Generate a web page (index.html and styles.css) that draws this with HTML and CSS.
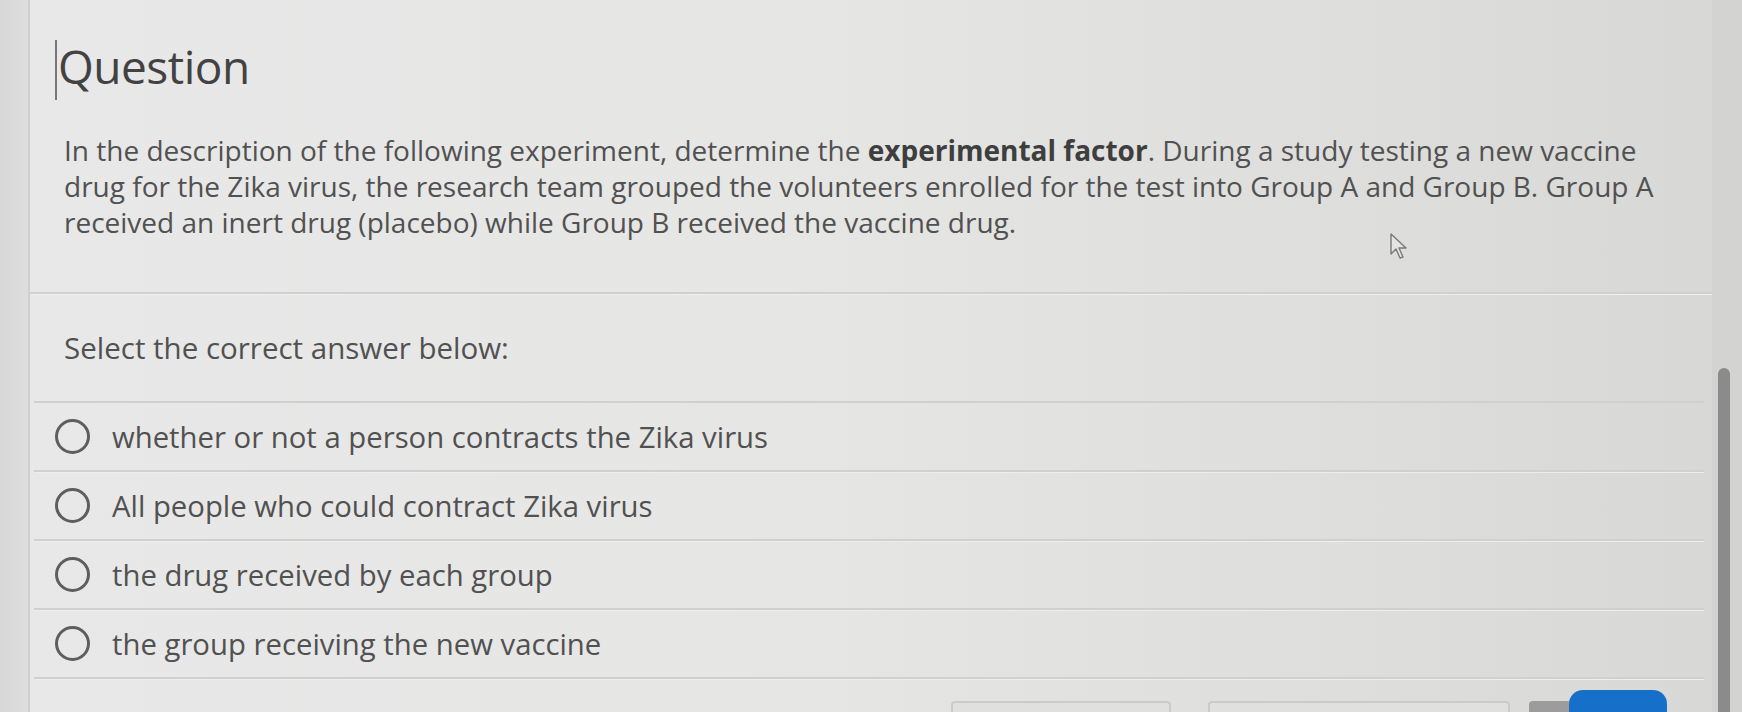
FILE: index.html
```html
<!DOCTYPE html>
<html lang="en">
<head>
  <meta charset="UTF-8">
  <title>Question</title>
  <link rel="stylesheet" href="styles.css">
</head>
<body>
  <div class="page">
    <main class="panel">
      <section class="question">
        <h1 class="title"><span class="caret"></span>Question</h1>
        <p class="prompt">In the description of the following experiment, determine the <b>experimental factor</b>. During a study testing a new vaccine drug for the Zika virus, the research team grouped the volunteers enrolled for the test into Group A and Group B. Group A received an inert drug (placebo) while Group B received the vaccine drug.</p>
      </section>

      <section class="answers">
        <p class="instruction">Select the correct answer below:</p>
        <ul class="choices">
          <li class="choice"><span class="radio"></span><span>whether or not a person contracts the Zika virus</span></li>
          <li class="choice"><span class="radio"></span><span>All people who could contract Zika virus</span></li>
          <li class="choice"><span class="radio"></span><span>the drug received by each group</span></li>
          <li class="choice"><span class="radio"></span><span>the group receiving the new vaccine</span></li>
        </ul>
      </section>

      <footer class="actions">
        <span class="btn btn-outline btn-wide"></span>
        <span class="btn btn-outline btn-wider"></span>
        <span class="btn btn-gray"></span>
        <span class="btn btn-blue"></span>
      </footer>

      <svg class="pointer" width="22" height="30" viewBox="0 0 22 30">
        <path d="M3 2 L3 22 L8 17 L12 26 L15 25 L11 16 L18 16 Z" fill="#e4e4e4" stroke="#7a7a7a" stroke-width="1.4" stroke-linejoin="round"/>
      </svg>
    </main>

    <div class="scrollbar"><div class="thumb"></div></div>
  </div>
</body>
</html>
```

FILE: styles.css
```css
html, body {
  margin: 0;
  height: 100%;
  overflow: hidden;
}
body {
  font-family: "Open Sans", "Noto Sans", sans-serif;
  color: #515151;
  background-color: #d9d9d9;
}
.page {
  display: flex;
  height: 100%;
  padding-left: 28px;
  background: linear-gradient(to right, #d7d7d7, #dedede 28px, #dedede);
}
.panel {
  position: relative;
  flex: 1;
  border-left: 2px solid #cfcfcf;
  background: linear-gradient(to right, #e8e8e8, #e6e6e5 45%, #dcdcda 85%, #d8d8d6);
}

/* question */
.question {
  padding: 38px 0 52px 0;
  border-bottom: 2px solid #d0d0d0;
  box-shadow: 0 1px 0 #efefef;
}
.title {
  margin: 0 0 32px 25px;
  font-size: 46px;
  line-height: 56px;
  font-weight: 400;
  color: #424242;
  letter-spacing: -0.5px;
}
.caret {
  display: inline-block;
  width: 2px;
  height: 60px;
  margin-right: 1px;
  vertical-align: -16px;
  background-color: #777;
}
.prompt {
  margin: 0 0 0 34px;
  max-width: 1636px;
  font-size: 28px;
  line-height: 36px;
}
.prompt b {
  font-weight: 700;
  color: #3e3e3e;
}

/* answers */
.answers {
  padding-top: 34px;
}
.instruction {
  margin: 0 0 33px 34px;
  font-size: 29.5px;
  line-height: 40px;
}
.choices {
  list-style: none;
  margin: 0 8px 0 4px;
  padding: 0;
  border-top: 2px solid #d0d0d0;
}
.choice {
  display: flex;
  align-items: center;
  gap: 22px;
  height: 67px;
  padding-left: 21px;
  font-size: 29.3px;
  border-bottom: 2px solid #d0d0d0;
  box-shadow: 0 1px 0 #eeeeee;
}
.radio {
  flex: none;
  width: 29px;
  height: 29px;
  border: 3px solid #5e5e5e;
  border-radius: 50%;
}

/* bottom buttons, mostly cut off */
.actions {
  display: flex;
  justify-content: flex-end;
  align-items: flex-start;
  padding: 11px 45px 0 0;
}
.btn {
  display: block;
  height: 40px;
  margin-top: 11px;
}
.btn-outline {
  border: 2px solid #cbcbcb;
  border-bottom: none;
  border-radius: 4px 4px 0 0;
  background-color: #e0e0de;
}
.btn-wide { width: 216px; margin-right: 37px; }
.btn-wider { width: 298px; margin-right: 19px; }
.btn-gray {
  width: 40px;
  background-color: #9c9c9c;
  border-radius: 4px 0 0 0;
}
.btn-blue {
  width: 98px;
  margin-top: 0;
  background-color: #1670c9;
  border-radius: 14px 14px 0 0;
}

.pointer {
  position: absolute;
  left: 1358px;
  top: 232px;
}

/* scrollbar */
.scrollbar {
  width: 30px;
  background-color: #d3d3d2;
}
.thumb {
  width: 12px;
  height: 400px;
  margin: 368px 0 0 6px;
  border-radius: 6px;
  background-color: #8b8b8b;
}
```
